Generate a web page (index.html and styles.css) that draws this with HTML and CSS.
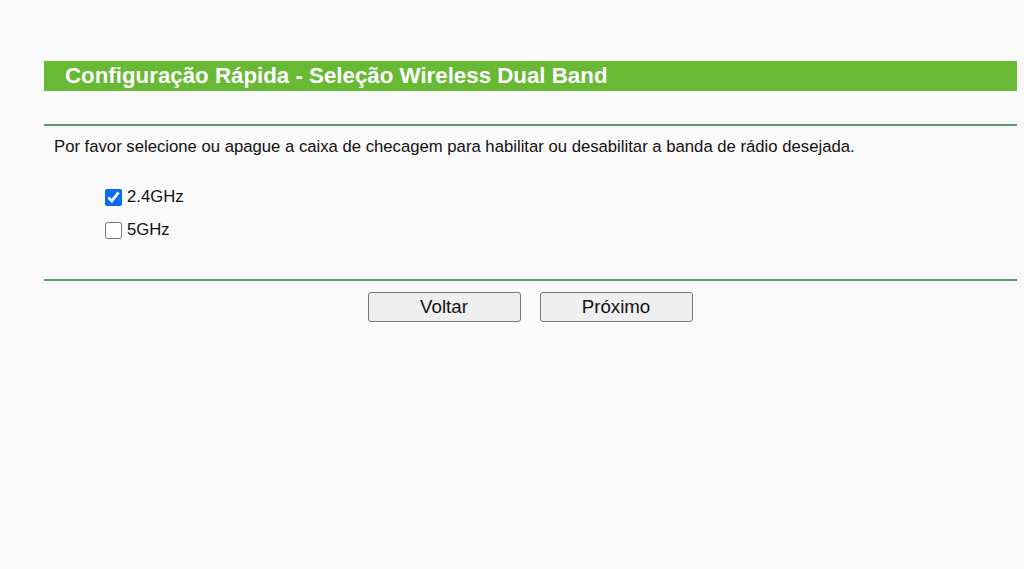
FILE: index.html
```html
<!DOCTYPE html>
<html lang="pt">
<head>
<meta charset="utf-8">
<title>Configuração Rápida</title>
<link rel="stylesheet" href="styles.css">
</head>
<body>
<div class="page">
  <div class="title">Configuração Rápida - Seleção Wireless Dual Band</div>
  <div class="rule"></div>
  <p class="intro">Por favor selecione ou apague a caixa de checagem para habilitar ou desabilitar a banda de rádio desejada.</p>
  <div class="options">
    <label class="opt"><input type="checkbox" checked><span>2.4GHz</span></label>
    <label class="opt"><input type="checkbox"><span>5GHz</span></label>
  </div>
  <div class="rule rule2"></div>
  <div class="buttons">
    <button class="btn">Voltar</button>
    <button class="btn">Próximo</button>
  </div>
</div>
</body>
</html>
```
FILE: styles.css
```css
html, body {
  margin: 0;
  padding: 0;
  background: #fafafa;
  font-family: "Liberation Sans", Arial, sans-serif;
  color: #111;
}
.page {
  width: 973px;
  margin-left: 44px;
  padding-top: 61px;
}
.title {
  height: 30px;
  background: #68b934;
  color: #fff;
  font-weight: bold;
  font-size: 22.3px;
  line-height: 29px;
  padding-left: 21px;
}
.rule {
  height: 2px;
  background: #5d9b6e;
  margin-top: 33px;
}
.intro {
  margin: 11px 0 0 10px;
  font-size: 16.7px;
  line-height: 20px;
}
.options {
  display: flex;
  flex-direction: column;
  gap: 13px;
  margin: 30px 0 0 61px;
}
.opt {
  display: flex;
  align-items: center;
  font-size: 16.7px;
  line-height: 20px;
  height: 20px;
}
.opt input {
  width: 17px;
  height: 17px;
  margin: 0 5px 0 0;
  accent-color: #0b6bf0;
}
.rule2 {
  margin-top: 39px;
}
.buttons {
  display: flex;
  justify-content: center;
  gap: 19px;
  margin-top: 11px;
  padding-right: 1px;
}
.btn {
  width: 153px;
  height: 30px;
  font-family: "Liberation Sans", Arial, sans-serif;
  font-size: 18.7px;
  color: #111;
  background: #efefef;
  border: 1px solid #767676;
  border-radius: 3px;
  padding: 0;
}
```
